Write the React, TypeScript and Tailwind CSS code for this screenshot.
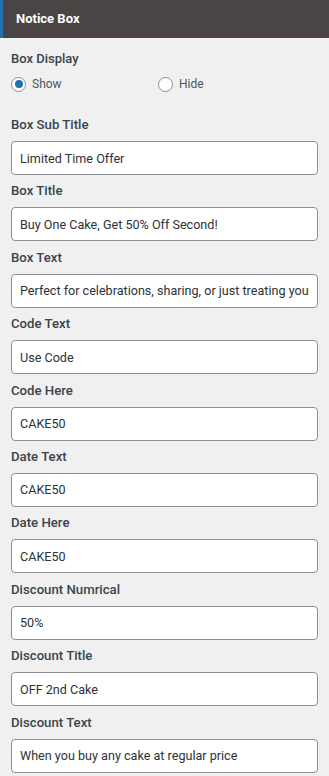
const FIELDS = [
  { label: 'Box Sub Title', value: 'Limited Time Offer' },
  { label: 'Box Title', value: 'Buy One Cake, Get 50% Off Second!' },
  { label: 'Box Text', value: 'Perfect for celebrations, sharing, or just treating yourself!' },
  { label: 'Code Text', value: 'Use Code' },
  { label: 'Code Here', value: 'CAKE50' },
  { label: 'Date Text', value: 'CAKE50' },
  { label: 'Date Here', value: 'CAKE50' },
  { label: 'Discount Numrical', value: '50%' },
  { label: 'Discount Title', value: 'OFF 2nd Cake' },
  { label: 'Discount Text', value: 'When you buy any cake at regular price' },
]

function Radio({ checked, label }: { checked?: boolean; label: string }) {
  return (
    <label className="flex items-center gap-[6px] text-[12px] text-[#50575e]">
      <span className="flex h-[15px] w-[15px] items-center justify-center rounded-full border border-[#8c8f94] bg-white">
        {checked && <span className="h-[8px] w-[8px] rounded-full bg-[#2271b1]" />}
      </span>
      {label}
    </label>
  )
}

export default function App() {
  return (
    <div
      className="h-[776px] w-[329px] overflow-hidden bg-[#f0f0f0]"
      style={{ fontFamily: 'Roboto, "Liberation Sans", sans-serif' }}
    >
      <div className="flex h-[38px] items-center border-l-[3px] border-[#2271b1] bg-[#4a4544] pl-[13px]">
        <p className="text-[13px] font-bold text-white">Notice Box</p>
      </div>

      <div className="px-[11px] pt-[11px]">
        <p className="text-[13px] font-medium leading-[20px] text-[#3c434a]">Box Display</p>
        <div className="mt-[5px] flex h-[20px] items-center">
          <div className="w-[147px]">
            <Radio checked label="Show" />
          </div>
          <Radio label="Hide" />
        </div>

        <div className="mt-[21px]">
          {FIELDS.map((f) => (
            <div key={f.label} className="mb-[6.4px]">
              <p className="mb-[6px] text-[13.2px] font-medium leading-[20px] text-[#3c434a]">{f.label}</p>
              <input
                readOnly
                value={f.value}
                className="block h-[34px] w-full rounded-[4px] border border-[#8c8f94] bg-white px-[8px] text-[12.6px] text-[#2c3338] outline-none"
              />
            </div>
          ))}
        </div>
      </div>
    </div>
  )
}
